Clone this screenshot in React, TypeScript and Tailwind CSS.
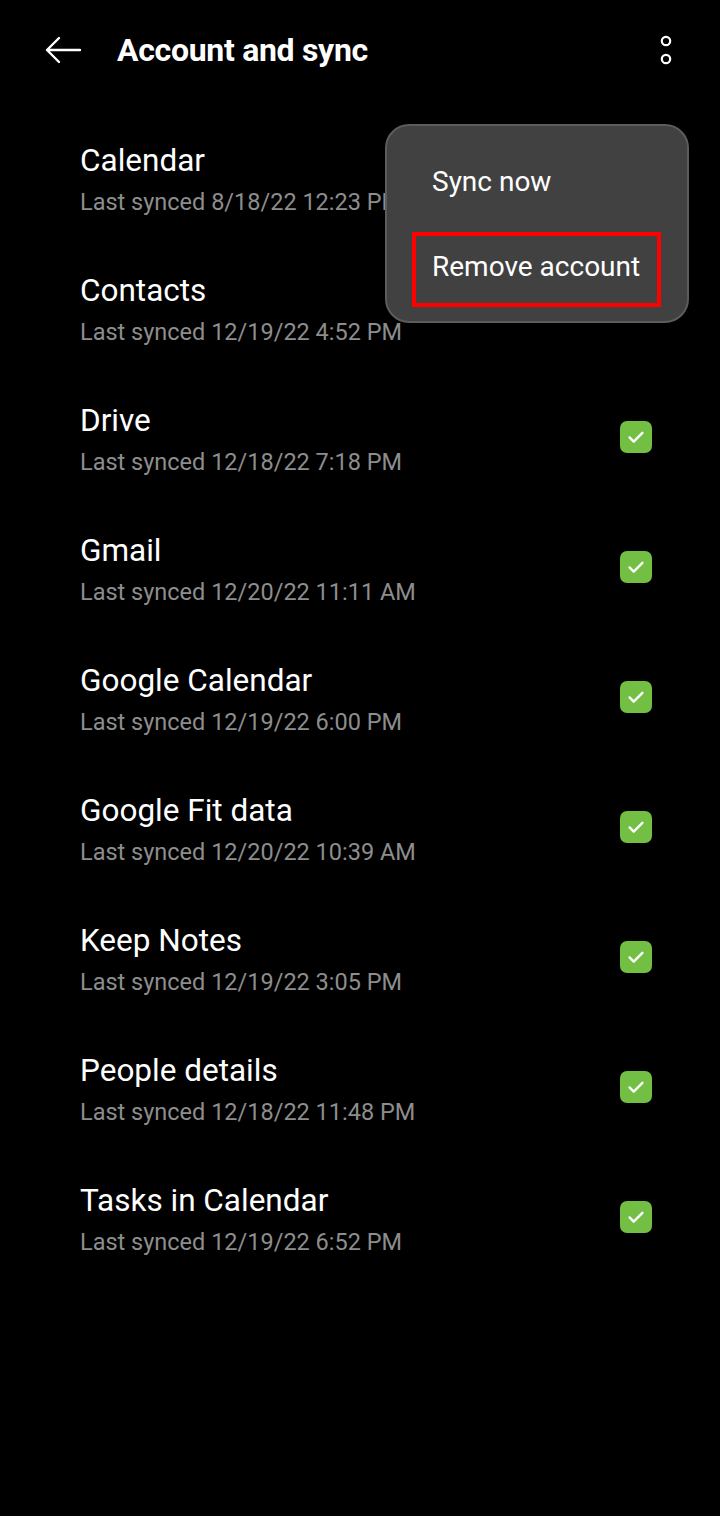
const ITEMS = [
  { name: 'Calendar', synced: '8/18/22 12:23 PM', checked: false },
  { name: 'Contacts', synced: '12/19/22 4:52 PM', checked: false },
  { name: 'Drive', synced: '12/18/22 7:18 PM', checked: true },
  { name: 'Gmail', synced: '12/20/22 11:11 AM', checked: true },
  { name: 'Google Calendar', synced: '12/19/22 6:00 PM', checked: true },
  { name: 'Google Fit data', synced: '12/20/22 10:39 AM', checked: true },
  { name: 'Keep Notes', synced: '12/19/22 3:05 PM', checked: true },
  { name: 'People details', synced: '12/18/22 11:48 PM', checked: true },
  { name: 'Tasks in Calendar', synced: '12/19/22 6:52 PM', checked: true },
]

function CheckBox() {
  return (
    <div className="w-[32px] h-[32px] rounded-[7px] bg-[#72bf44] flex items-center justify-center">
      <svg width="22" height="22" viewBox="0 0 24 24" fill="none" stroke="white" strokeWidth={2.6} strokeLinecap="round" strokeLinejoin="round">
        <path d="M5 12.5l4.5 4.5L19 7.5" />
      </svg>
    </div>
  )
}

export default function App() {
  return (
    <div className="relative w-[720px] h-[1516px] bg-black text-white overflow-hidden" style={{ fontFamily: 'Roboto, "Noto Sans", sans-serif' }}>
      {/* header */}
      <div className="h-[100px] flex items-center pl-[44px] pr-[46px]">
        <svg width="38" height="30" viewBox="0 0 38 30" fill="none" stroke="white" strokeWidth={2.4} strokeLinecap="round" strokeLinejoin="round">
          <path d="M3 15h33M15 3L3 15l12 12" />
        </svg>
        <div className="ml-[35px] text-[32px] font-bold tracking-[-0.3px] flex-1">Account and sync</div>
        <svg width="16" height="34" viewBox="0 0 16 34" fill="none" stroke="white" strokeWidth={2.2}>
          <circle cx="8" cy="8" r="4.2" />
          <circle cx="8" cy="26" r="4.2" />
        </svg>
      </div>

      {/* sync list */}
      <div className="pt-[16px]">
        {ITEMS.map((item) => (
          <div key={item.name} className="h-[130px] flex items-center justify-between pl-[80px] pr-[68px]">
            <div className="pb-[3px]">
              <div className="text-[31.5px] leading-[36px]">{item.name}</div>
              <div className="mt-[8px] text-[23.5px] leading-[30px] text-[#8d8d8d]">Last synced {item.synced}</div>
            </div>
            {item.checked && (
              <div className="mb-[8px]">
                <CheckBox />
              </div>
            )}
          </div>
        ))}
      </div>

      {/* overflow menu */}
      <div className="absolute left-[385px] top-[124px] w-[304px] h-[199px] rounded-[24px] bg-[#414141] border-2 border-[#5c5c5c] pt-[32px] px-[25px]">
        <div className="h-[48px] flex items-center pl-[20px] text-[28px]">Sync now</div>
        <div className="mt-[26px] w-[249px] h-[75px] border-4 border-[#ff0000] flex items-center pl-[16px] pb-[6px] text-[28px]">
          Remove account
        </div>
      </div>
    </div>
  )
}
